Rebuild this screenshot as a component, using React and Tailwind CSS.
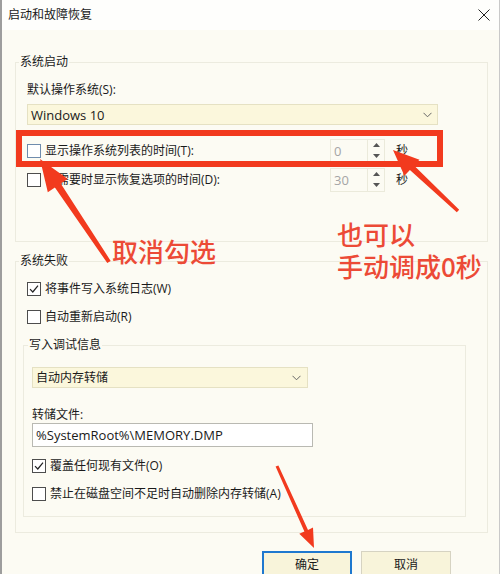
import React from "react";

function arrowPoints(x1, y1, x2, y2, w1, w2, hw, hl) {
  const dx = x2 - x1, dy = y2 - y1;
  const L = Math.hypot(dx, dy);
  const ux = dx / L, uy = dy / L;
  const px = -uy, py = ux;
  const bx = x2 - ux * hl, by = y2 - uy * hl;
  const pts = [
    [x1 + px * w1 / 2, y1 + py * w1 / 2],
    [bx + px * w2 / 2, by + py * w2 / 2],
    [bx + px * hw / 2, by + py * hw / 2],
    [x2, y2],
    [bx - px * hw / 2, by - py * hw / 2],
    [bx - px * w2 / 2, by - py * w2 / 2],
    [x1 - px * w1 / 2, y1 - py * w1 / 2],
  ];
  return pts.map((p) => p[0].toFixed(1) + "," + p[1].toFixed(1)).join(" ");
}

function Box({ checked, focus }) {
  return (
    <span
      className={
        focus
          ? "w-[14px] h-[14px] border border-[#6f8cad] bg-white flex items-center justify-center shrink-0"
          : "w-[14px] h-[14px] border border-[#4d4d4d] bg-white flex items-center justify-center shrink-0"
      }
    >
      {checked && (
        <svg width="10" height="10" viewBox="0 0 10 10">
          <path d="M1 5.2 L3.8 8 L9 1.6" fill="none" stroke="#222" strokeWidth="1.2" />
        </svg>
      )}
    </span>
  );
}

function Chevron() {
  return (
    <svg width="9" height="6" viewBox="0 0 9 6">
      <path d="M0.5 0.8 L4.5 4.8 L8.5 0.8" fill="none" stroke="#666" strokeWidth="1" />
    </svg>
  );
}

function Spin({ value }) {
  return (
    <div className="w-[55px] h-[24px] border border-[#ebeadb] flex bg-[#fcfbf3]">
      <span className="flex-1 pl-[3px] text-[13px] text-[#a5a5a5] leading-[22px]">{value}</span>
      <div className="w-[17px] flex flex-col border-l border-[#ebeadb]">
        <div className="flex-1 flex items-center justify-center">
          <svg width="7" height="4" viewBox="0 0 7 4">
            <path d="M0 4 L3.5 0 L7 4 Z" fill="#555" />
          </svg>
        </div>
        <div className="flex-1 flex items-center justify-center">
          <svg width="7" height="4" viewBox="0 0 7 4">
            <path d="M0 0 L3.5 4 L7 0 Z" fill="#555" />
          </svg>
        </div>
      </div>
    </div>
  );
}

function CheckRow({ checked, focus, children }) {
  return (
    <div className="h-[28px] flex items-center gap-[4px]">
      <Box checked={checked} focus={focus} />
      <span className="leading-[16px] text-[#1a1a1a]">{children}</span>
    </div>
  );
}

function TimeRow({ label, value, focus }) {
  return (
    <div className="h-[29px] flex items-center">
      <div className="w-[303px] flex items-center gap-[4px]">
        <Box focus={focus} />
        <span className="leading-[16px] text-[#1a1a1a]">{label}</span>
      </div>
      <Spin value={value} />
      <span className="ml-[11px] leading-[16px] text-[#1a1a1a]">秒</span>
    </div>
  );
}

export default function App() {
  return (
    <div className="w-[500px] h-[574px] relative overflow-hidden bg-[#fcfbf3] border-l-2 border-l-[#9d9d9d] border-r border-r-[#c9c9c9] font-['Open_Sans','Noto_Sans_CJK_SC',sans-serif] text-[12px] text-[#1a1a1a]">
      {/* title bar */}
      <div className="h-[30px] flex items-center justify-between pl-[6px] pr-[9px] bg-[#fefefc]">
        <span className="leading-[16px]">启动和故障恢复</span>
        <svg width="12" height="12" viewBox="0 0 12 12">
          <path d="M0.5 0.5 L11.5 11.5 M11.5 0.5 L0.5 11.5" stroke="#222" strokeWidth="1" />
        </svg>
      </div>

      <div className="pl-[13px]">
        {/* 系统启动 */}
        <fieldset className="mt-[24px] w-[473px] border border-[#ecebdf]">
          <legend className="ml-[3px] px-[1px] leading-[16px]">系统启动</legend>
          <div className="pl-[11px] pt-[12px] pb-[47px]">
            <div className="h-[16px] leading-[16px]">默认操作系统(S):</div>
            <div className="mt-[6px] w-[411px] h-[21px] bg-[#fbf7dc] border border-[#e5e1c3] flex items-center justify-between pl-[3px] pr-[5px]">
              <span className="text-[13px] leading-[16px]">Windows 10</span>
              <Chevron />
            </div>
            <div className="mt-[11px]">
              <TimeRow label="显示操作系统列表的时间(T):" value="0" focus />
              <TimeRow label="在需要时显示恢复选项的时间(D):" value="30" />
            </div>
          </div>
        </fieldset>

        {/* 系统失败 */}
        <fieldset className="mt-[11px] w-[473px] border border-[#ecebdf]">
          <legend className="ml-[3px] px-[1px] leading-[16px]">系统失败</legend>
          <div className="pl-[11px] pt-[6px]">
            <CheckRow checked>将事件写入系统日志(W)</CheckRow>
            <CheckRow>自动重新启动(R)</CheckRow>
          </div>
          <div className="pl-[7px] pt-[6px] pb-[15px]">
            <fieldset className="w-[443px] border border-[#ecebdf]">
              <legend className="ml-[4px] px-[1px] leading-[16px]">写入调试信息</legend>
              <div className="pl-[8px] pt-[14px] pb-[8px]">
                <div className="w-[276px] h-[21px] bg-[#fbf7dc] border border-[#e5e1c3] flex items-center justify-between pl-[3px] pr-[6px]">
                  <span className="leading-[16px]">自动内存转储</span>
                  <Chevron />
                </div>
                <div className="mt-[19px] h-[16px] leading-[16px]">转储文件:</div>
                <div className="w-[281px] h-[24px] bg-white border border-[#b9b9b2] flex items-center pl-[3px]">
                  <span className="text-[13px] leading-[16px]">%SystemRoot%\MEMORY.DMP</span>
                </div>
                <div className="mt-[5px]">
                  <CheckRow checked>覆盖任何现有文件(O)</CheckRow>
                  <CheckRow>禁止在磁盘空间不足时自动删除内存转储(A)</CheckRow>
                </div>
              </div>
            </fieldset>
          </div>
        </fieldset>
      </div>

      {/* buttons */}
      <div className="mt-[18px] flex justify-end gap-[9px] pr-[48px]">
        <button className="w-[90px] h-[28px] bg-[#f8f4da] border-2 border-[#1e78cf] leading-[16px]">确定</button>
        <button className="w-[90px] h-[28px] bg-[#f8f4da] border border-[#d6d3c2] leading-[16px]">取消</button>
      </div>

      {/* annotations */}
      <div className="absolute left-[14px] top-[130px] w-[427px] h-[37px] border-[6px] border-[#f23a1e] pointer-events-none" />
      <div className="absolute left-[110px] top-[236px] text-[26px] leading-[30px] font-medium text-[#ec4a36] font-['Noto_Sans_CJK_SC',sans-serif]">
        取消勾选
      </div>
      <div className="absolute left-[335px] top-[219px] text-[26px] leading-[30px] font-medium text-[#ec4a36] font-['Noto_Sans_CJK_SC',sans-serif]">
        也可以
      </div>
      <div className="absolute left-[335px] top-[251px] text-[26px] leading-[30px] font-medium text-[#ec4a36] font-['Noto_Sans_CJK_SC',sans-serif]">
        手动调成0秒
      </div>
      <svg className="absolute left-0 top-0 pointer-events-none" width="500" height="574" viewBox="0 0 500 574">
        <polygon points={arrowPoints(107, 262, 38, 159, 4, 7, 24, 32)} fill="#f23a1e" />
        <polygon points={arrowPoints(456, 211, 391, 150, 3.5, 6, 22, 26)} fill="#f23a1e" />
        <polygon points={arrowPoints(275, 466, 312, 548, 3, 4, 15, 19)} fill="#f23a1e" />
      </svg>
    </div>
  );
}
